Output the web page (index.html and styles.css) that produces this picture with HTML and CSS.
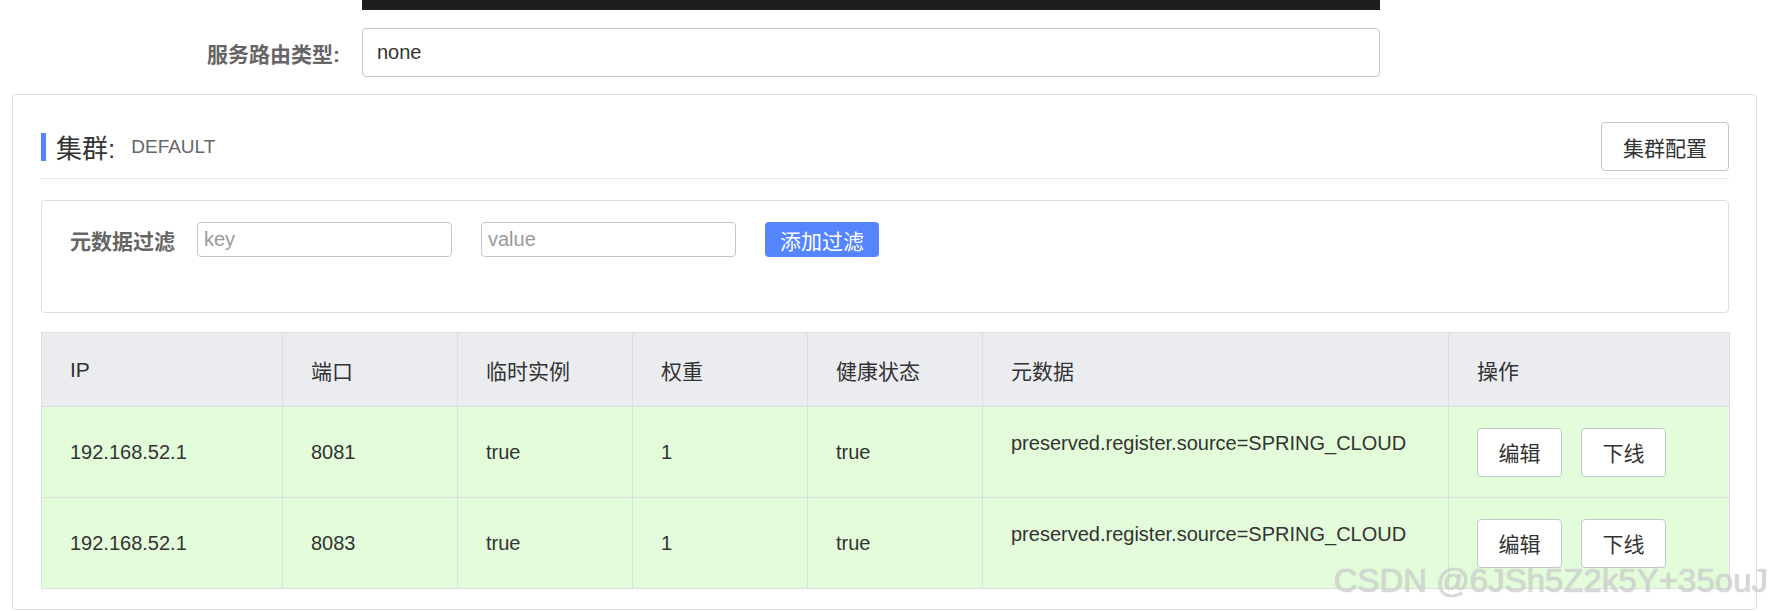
FILE: index.html
```html
<!DOCTYPE html>
<html lang="zh-CN">
<head>
<meta charset="utf-8">
<title>服务详情</title>
<link rel="stylesheet" href="styles.css">
</head>
<body>
<div class="page">
  <div class="editor-bottom"></div>

  <div class="form-row">
    <label class="form-label" for="route-type">服务路由类型:</label>
    <input id="route-type" class="text-input" type="text" value="none" readonly>
  </div>

  <section class="card">
    <header class="card-head">
      <h2 class="card-title"><span class="title-bar"></span>集群:<span class="cluster-name">DEFAULT</span></h2>
      <button class="btn btn-cluster" type="button">集群配置</button>
    </header>

    <div class="filter-box">
      <div class="filter-row">
        <span class="filter-label">元数据过滤</span>
        <input class="filter-input" type="text" placeholder="key">
        <input class="filter-input" type="text" placeholder="value">
        <button class="btn-primary" type="button">添加过滤</button>
      </div>
    </div>

    <table class="instance-table">
      <colgroup>
        <col class="c-ip"><col class="c-port"><col class="c-eph"><col class="c-weight"><col class="c-health"><col class="c-meta"><col class="c-ops">
      </colgroup>
      <thead>
        <tr>
          <th>IP</th><th>端口</th><th>临时实例</th><th>权重</th><th>健康状态</th><th>元数据</th><th>操作</th>
        </tr>
      </thead>
      <tbody>
        <tr>
          <td>192.168.52.1</td><td>8081</td><td>true</td><td>1</td><td>true</td>
          <td><div class="meta">preserved.register.source=SPRING_CLOUD</div></td>
          <td><div class="ops"><button class="btn btn-op" type="button">编辑</button><button class="btn btn-op" type="button">下线</button></div></td>
        </tr>
        <tr>
          <td>192.168.52.1</td><td>8083</td><td>true</td><td>1</td><td>true</td>
          <td><div class="meta">preserved.register.source=SPRING_CLOUD</div></td>
          <td><div class="ops"><button class="btn btn-op" type="button">编辑</button><button class="btn btn-op" type="button">下线</button></div></td>
        </tr>
      </tbody>
    </table>
  </section>

  <div class="watermark">CSDN @6JSh5Z2k5Y+35ouJ</div>
</div>
</body>
</html>
```

FILE: styles.css
```css
* { box-sizing: border-box; }

html, body {
  margin: 0;
  padding: 0;
  background: #ffffff;
}

body {
  font-family: "Liberation Sans", "Noto Sans CJK SC", sans-serif;
  color: #333333;
  font-size: 20px;
}

.page {
  position: relative;
  width: 1772px;
  height: 611px;
  overflow: hidden;
}

.editor-bottom {
  margin-left: 362px;
  width: 1018px;
  height: 10px;
  background: #1e1e1e;
}

.form-row {
  display: grid;
  grid-template-columns: 340px 1018px;
  column-gap: 22px;
  align-items: center;
  margin-top: 18px;
}

.form-label {
  text-align: right;
  font-size: 21px;
  font-weight: 700;
  color: #666666;
}

.text-input {
  height: 49px;
  width: 100%;
  border: 1px solid #c4c6cf;
  border-radius: 4px;
  padding: 0 14px;
  font-family: inherit;
  font-size: 20px;
  color: #333333;
  background: #ffffff;
  outline: none;
}

.card {
  margin: 17px 0 0 12px;
  width: 1745px;
  border: 1px solid #dcdee3;
  border-radius: 4px;
  padding: 27px 27px 20px 28px;
  background: #ffffff;
}

.card-head {
  display: flex;
  align-items: center;
  justify-content: space-between;
  padding-bottom: 7px;
  border-bottom: 1px solid #e6e7eb;
}

.card-title {
  display: flex;
  align-items: center;
  margin: 0;
  font-size: 26px;
  font-weight: 400;
  color: #333333;
}

.title-bar {
  display: inline-block;
  width: 5px;
  height: 28px;
  background: #5584ff;
  margin-right: 10px;
}

.cluster-name {
  margin-left: 16px;
  font-size: 19px;
  color: #666666;
}

.btn {
  font-family: inherit;
  font-size: 21px;
  color: #333333;
  background: #ffffff;
  border: 1px solid #c4c6cf;
  border-radius: 4px;
  padding: 0;
  cursor: pointer;
}

.btn-cluster {
  width: 128px;
  height: 49px;
}

.filter-box {
  margin-top: 21px;
  height: 113px;
  border: 1px solid #dcdee3;
  border-radius: 4px;
  padding: 21px 27px 0 28px;
}

.filter-row {
  display: flex;
  align-items: center;
  height: 35px;
}

.filter-label {
  font-size: 21px;
  font-weight: 700;
  color: #666666;
  margin-right: 22px;
}

.filter-input {
  width: 255px;
  height: 35px;
  border: 1px solid #c4c6cf;
  border-radius: 4px;
  padding: 0 6px;
  margin-right: 29px;
  font-family: inherit;
  font-size: 20px;
  color: #333333;
  outline: none;
}

.filter-input::placeholder {
  color: #999999;
}

.btn-primary {
  width: 114px;
  height: 35px;
  border: none;
  border-radius: 4px;
  background: #5584ff;
  color: #ffffff;
  font-family: inherit;
  font-size: 21px;
  padding: 0;
}

.instance-table {
  margin-top: 19px;
  width: 100%;
  border-collapse: collapse;
  table-layout: fixed;
  border: 1px solid #dcdee3;
}

.c-ip { width: 241px; }
.c-port, .c-eph, .c-weight, .c-health { width: 175px; }
.c-meta { width: 466px; }
.c-ops { width: 281px; }

.instance-table th,
.instance-table td {
  border: 1px solid #dcdee3;
  padding: 0 12px 0 28px;
  text-align: left;
  vertical-align: middle;
}

.instance-table th {
  height: 74px;
  background: #ebecf0;
  font-size: 21px;
  font-weight: 400;
  color: #333333;
}

.instance-table td {
  height: 91px;
  background: #e3fcda;
  font-size: 20px;
  color: #333333;
}

.meta {
  padding-bottom: 18px;
  white-space: nowrap;
}

.ops {
  display: flex;
  gap: 19px;
}

.btn-op {
  width: 85px;
  height: 49px;
}

.watermark {
  position: absolute;
  right: 4px;
  bottom: 11px;
  font-family: "Liberation Sans", sans-serif;
  font-size: 33px;
  color: rgba(225, 225, 225, 0.8);
  text-shadow: 0 0 1px rgba(110, 110, 110, 0.55);
  white-space: nowrap;
  pointer-events: none;
}
```
